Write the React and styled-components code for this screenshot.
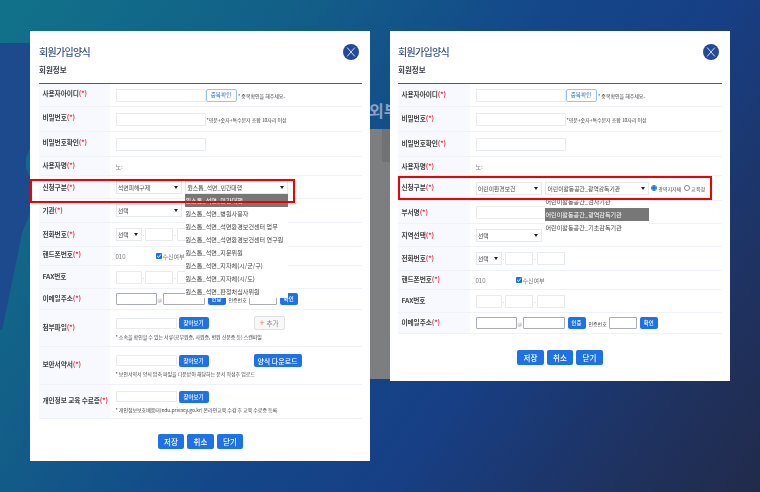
import React from "react";
import styled, { createGlobalStyle } from "styled-components";

const GlobalStyle = createGlobalStyle`
  html, body {
    margin: 0;
    padding: 0;
    width: 760px;
    height: 492px;
    overflow: hidden;
    background: #17408a;
  }
  * {
    box-sizing: border-box;
  }
`;

const Page = styled.div`
  position: relative;
  width: 760px;
  height: 492px;
  overflow: hidden;
  display: flex;
  align-items: flex-start;
  gap: 20px;
  padding: 31px 0 0 30px;
  font-family: "Noto Sans CJK KR", "Noto Sans", sans-serif;
  background: linear-gradient(125deg, #11728a 0%, #126088 26%, #14478a 50%, #173f85 66%, #1f3260 86%, #212a4a 100%);
`;

const LeftShape = styled.div`
  position: absolute;
  left: 0;
  top: 43px;
  width: 30px;
  height: 290px;
  background: #1c4a8c;
  clip-path: polygon(0 0, 30px 0, 30px 105px, 26px 115px, 26px 125px, 30px 135px, 30px 170px, 22px 190px, 15px 225px, 2px 287px, 0 287px);
`;

const BackWindow = styled.div`
  position: absolute;
  left: 370px;
  top: 129px;
  width: 20px;
  height: 251px;
  background: #7d7e7f;
  border-bottom: 1px solid #1f3f7d;
`;

const BackScroll = styled.div`
  position: absolute;
  right: 0;
  top: 0;
  width: 8px;
  height: 33px;
  background: #717273;
`;

const BackTitle = styled.div`
  position: absolute;
  left: 369px;
  top: 98px;
  white-space: nowrap;
  font-size: 16px;
  font-weight: 700;
  color: #8ba2c6;
`;

const Panel = styled.section`
  --inset: ${(p) => p.$inset}px;
  position: relative;
  z-index: 1;
  flex: 0 0 340px;
  height: ${(p) => p.$height}px;
  padding: 13px 8px 0 var(--inset);
  background: #fff;
  filter: blur(0.45px);
`;

const Head = styled.header`
  display: flex;
  align-items: center;
  justify-content: space-between;
  height: 16px;
  padding-right: 3px;
`;

const Title = styled.h2`
  margin: 0;
  font-size: 10px;
  line-height: 14px;
  font-weight: 500;
  letter-spacing: -0.7px;
  color: #3a5688;
`;

const CloseButton = styled.button`
  display: block;
  width: 16px;
  height: 16px;
  padding: 0;
  border: 0;
  background: none;
  svg {
    display: block;
  }
`;

const SubTitle = styled.h3`
  margin: 3px 0 0;
  height: 20px;
  font-size: 7.5px;
  line-height: 14px;
  font-weight: 700;
  color: #3c4048;
`;

const Table = styled.div`
  border-top: 1px solid #2f5fa8;
`;

const Row = styled.div`
  display: flex;
  height: ${(p) => p.$h}px;
  border-bottom: 1.5px solid #eff2f6;
`;

const Label = styled.div`
  flex: 0 0 calc(80px - var(--inset));
  padding: ${(p) => p.$top}px 0 0 3.5px;
  background: #f7f9fe;
  font-size: 6.7px;
  line-height: 10px;
  font-weight: 700;
  letter-spacing: -0.1px;
  white-space: nowrap;
  color: #444;
`;

const Req = styled.span`
  color: #e8303c;
`;

const Cell = styled.div`
  flex: 1;
  display: flex;
  align-items: center;
  padding-left: 5.5px;
  font-size: 6px;
  color: #777;
  white-space: nowrap;
`;

const StackCell = styled(Cell)`
  flex-direction: column;
  align-items: flex-start;
  justify-content: center;
  gap: 3px;
`;

const Line = styled.div`
  display: flex;
  align-items: center;
`;

const Input = styled.div`
  flex: 0 0 auto;
  width: ${(p) => p.$w}px;
  height: ${(p) => p.$h || 13}px;
  margin-left: ${(p) => p.$ml || 0}px;
  background: #fff;
  border: 1px solid ${(p) => (p.$dark ? "#a9acb2" : "#e9ebef")};
  border-radius: 1px;
`;

const Select = styled.div`
  flex: 0 0 auto;
  display: flex;
  align-items: center;
  justify-content: space-between;
  width: ${(p) => p.$w}px;
  height: 13px;
  margin-right: ${(p) => p.$mr || 0}px;
  padding: 0 3px 0 1.5px;
  background: #fff;
  border: 1px solid #e6e8ec;
  font-size: 5.8px;
  color: #444;
  &::after {
    content: "";
    border-left: 2px solid transparent;
    border-right: 2px solid transparent;
    border-top: 3px solid #222;
  }
`;

const Note = styled.span`
  font-size: 5px;
  line-height: 7px;
  letter-spacing: -0.05px;
  color: #444;
  margin-left: ${(p) => p.$ml || 0}px;
`;

const Dash = styled.span`
  flex: 0 0 ${(p) => p.$w || 3}px;
  text-align: center;
  font-size: 5px;
  color: #888;
`;

const CheckBox = styled.span`
  display: inline-flex;
  align-items: center;
  justify-content: center;
  width: 6px;
  height: 6px;
  margin-left: ${(p) => p.$ml}px;
  margin-right: 1px;
  border-radius: 1px;
  background: #1a73d8;
`;

const OutlineButton = styled.div`
  flex: 0 0 auto;
  display: flex;
  align-items: center;
  justify-content: center;
  width: 31px;
  height: 13px;
  border: 1px solid #9cc0ef;
  border-radius: 2px;
  background: #fff;
  font-size: 5.6px;
  color: #2f74c8;
`;

const BlueButton = styled.div`
  flex: 0 0 auto;
  display: flex;
  align-items: center;
  justify-content: center;
  width: ${(p) => p.$w}px;
  height: ${(p) => p.$h || 12}px;
  margin-left: ${(p) => p.$ml || 0}px;
  border-radius: 2px;
  background: #1f72e6;
  font-size: ${(p) => p.$fs || 5.4}px;
  font-weight: 500;
  color: #fff;
`;

const AddButton = styled.div`
  flex: 0 0 auto;
  display: flex;
  align-items: center;
  justify-content: center;
  gap: 2px;
  width: 31px;
  height: 14px;
  margin-left: 45px;
  border: 1px solid #dfe1e4;
  border-radius: 2px;
  background: #f8f8f8;
  font-size: 6.6px;
  color: #888;
  i {
    font-style: normal;
    font-size: 9px;
    line-height: 8px;
    color: #ef7a68;
  }
`;

const Actions = styled.div`
  display: flex;
  justify-content: center;
  gap: 3px;
  margin-top: ${(p) => p.$mt}px;
`;

const ActionButton = styled.div`
  display: flex;
  align-items: center;
  justify-content: center;
  width: 26.5px;
  height: 15px;
  border-radius: 2px;
  background: #1f72e6;
  font-size: 7.5px;
  font-weight: 500;
  color: #fff;
`;

const Dropdown = styled.ul`
  position: absolute;
  left: ${(p) => p.$x}px;
  top: ${(p) => p.$y}px;
  width: ${(p) => p.$w}px;
  margin: 0;
  padding: 0;
  list-style: none;
  background: #fff;
`;

const Option = styled.li`
  height: 13px;
  padding-left: 0.5px;
  font-size: 6.1px;
  line-height: 13px;
  white-space: nowrap;
  color: ${(p) => (p.$active ? "#fff" : "#444")};
  background: ${(p) => (p.$active ? "#777" : "#fff")};
`;

const Highlight = styled.div`
  position: absolute;
  left: ${(p) => p.$x}px;
  top: ${(p) => p.$y}px;
  width: ${(p) => p.$w}px;
  height: ${(p) => p.$h}px;
  border: 2.5px solid #f00000;
  pointer-events: none;
`;

const Radio = styled.span`
  flex: 0 0 auto;
  width: 6.3px;
  height: 6.3px;
  margin-left: ${(p) => p.$ml}px;
  margin-right: 1px;
  border-radius: 50%;
  border: 1px solid ${(p) => (p.$on ? "#1a73d8" : "#888")};
  background: ${(p) => (p.$on ? "radial-gradient(circle, #1a73d8 55%, #fff 60%)" : "#fff")};
`;

const CloseIcon = () => (
  <svg width="16" height="16" viewBox="0 0 16 16">
    <circle cx="8" cy="8" r="8" fill="#24499a" />
    <path d="M4.2 3.6 11.8 12.4M11.8 3.6 4.2 12.4" stroke="#e8eefa" strokeWidth="0.9" fill="none" />
  </svg>
);

const Check = () => (
  <svg width="6" height="6" viewBox="0 0 6 6">
    <path d="M1.2 3 2.6 4.4 4.9 1.5" stroke="#fff" strokeWidth="1" fill="none" />
  </svg>
);

const FieldLabel = ({ top, text, required = true }) => (
  <Label $top={top}>
    {text}
    {required && <Req>(*)</Req>}
  </Label>
);

const PhoneInputs = ({ first }) => (
  <>
    {first ? <Select $w={26}>선택</Select> : <Input $w={26} />}
    <Dash $w={3.5}>-</Dash>
    <Input $w={28} />
    <Dash $w={3.5}>-</Dash>
    <Input $w={28} />
  </>
);

const EmailInputs = () => (
  <>
    <Input $w={41.5} $h={12} $dark />
    <Dash $w={5.5}>@</Dash>
    <Input $w={42} $h={12} $dark />
    <BlueButton $w={18} $ml={3}>인증</BlueButton>
    <Note $ml={3}>인증번호</Note>
    <Input $w={28} $h={12} $dark $ml={2} />
    <BlueButton $w={18} $ml={3}>확인</BlueButton>
  </>
);

const leftOptions = [
  "원스톱_석면_민간대행",
  "원스톱_석면_병원사용자",
  "원스톱_석면_석면환경보건센터 업무",
  "원스톱_석면_석면환경보건센터 연구원",
  "원스톱_석면_지문위원",
  "원스톱_석면_지자체(시/군/구)",
  "원스톱_석면_지자체(시/도)",
  "원스톱_석면_판정처심사위원",
];

const rightOptions = [
  "어린이활동공간_검사기관",
  "어린이활동공간_광역감독기관",
  "어린이활동공간_기초감독기관",
];

const TopRows = ({ tops }) => (
  <>
    <Row $h={23}>
      <FieldLabel top={tops[0]} text="사용자아이디" />
      <Cell>
        <Input $w={90} />
        <OutlineButton>중복확인</OutlineButton>
        <Note $ml={1.5}>* 중복확인을 해주세요.</Note>
      </Cell>
    </Row>
    <Row $h={25}>
      <FieldLabel top={tops[1]} text="비밀번호" />
      <Cell>
        <Input $w={90} />
        <Note $ml={1}>*영문+숫자+특수문자 조합 10자리 이상</Note>
      </Cell>
    </Row>
    <Row $h={25}>
      <FieldLabel top={tops[2]} text="비밀번호확인" />
      <Cell>
        <Input $w={90} />
      </Cell>
    </Row>
    <Row $h={19}>
      <FieldLabel top={tops[3]} text="사용자명" />
      <Cell>노:</Cell>
    </Row>
  </>
);

const LeftPanel = () => (
  <Panel $inset={9} $height={430}>
    <Head>
      <Title>회원가입양식</Title>
      <CloseButton aria-label="닫기">
        <CloseIcon />
      </CloseButton>
    </Head>
    <SubTitle>회원정보</SubTitle>
    <Table>
      <TopRows tops={[4, 5, 5, 3]} />
      <Row $h={23}>
        <FieldLabel top={6} text="신청구분" />
        <Cell>
          <Select $w={66} $mr={3.5}>석면피해구제</Select>
          <Select $w={103}>원스톱_석면_민간대행</Select>
        </Cell>
      </Row>
      <Row $h={24}>
        <FieldLabel top={6} text="기관" />
        <Cell>
          <Select $w={66}>선택</Select>
        </Cell>
      </Row>
      <Row $h={24}>
        <FieldLabel top={6} text="전화번호" />
        <Cell>
          <PhoneInputs first />
        </Cell>
      </Row>
      <Row $h={19}>
        <FieldLabel top={2} text="핸드폰번호" />
        <Cell>
          010
          <CheckBox $ml={30}>
            <Check />
          </CheckBox>
          수신여부
        </Cell>
      </Row>
      <Row $h={23}>
        <FieldLabel top={5} text="FAX번호" required={false} />
        <Cell>
          <PhoneInputs />
        </Cell>
      </Row>
      <Row $h={21}>
        <FieldLabel top={4} text="이메일주소" />
        <Cell>
          <EmailInputs />
        </Cell>
      </Row>
      <Row $h={37}>
        <FieldLabel top={12} text="첨부파일" />
        <StackCell>
          <Line>
            <Input $w={61} $h={11} />
            <BlueButton $w={30} $ml={2}>찾아보기</BlueButton>
            <AddButton>
              <i>+</i>추가
            </AddButton>
          </Line>
          <Note>* 소속을 확인할 수 있는 서류(공무원증, 사원증, 병원 신분증 등) 스캔파일</Note>
        </StackCell>
      </Row>
      <Row $h={38}>
        <FieldLabel top={12} text="보안서약서" />
        <StackCell>
          <Line>
            <Input $w={61} $h={11} />
            <BlueButton $w={30} $ml={2}>찾아보기</BlueButton>
            <BlueButton $w={48} $h={13} $ml={45} $fs={7}>양식 다운로드</BlueButton>
          </Line>
          <Note>* 보안서약서 양식 압축 파일을 다운받아 해당하는 문서 작성후 업로드</Note>
        </StackCell>
      </Row>
      <Row $h={34}>
        <FieldLabel top={10} text="개인정보 교육 수료증" />
        <StackCell>
          <Line>
            <Input $w={61} $h={11} />
            <BlueButton $w={30} $ml={2}>찾아보기</BlueButton>
          </Line>
          <Note>* 개인정보보호배움터(edu.privacy.go.kr) 온라인교육 수강 후 교육 수료증 등록</Note>
        </StackCell>
      </Row>
    </Table>
    <Actions $mt={15}>
      <ActionButton>저장</ActionButton>
      <ActionButton>취소</ActionButton>
      <ActionButton>닫기</ActionButton>
    </Actions>
    <Dropdown $x={155} $y={163} $w={103}>
      {leftOptions.map((o, i) => (
        <Option key={o} $active={i === 0}>{o}</Option>
      ))}
    </Dropdown>
    <Highlight $x={0} $y={148} $w={265} $h={24} />
  </Panel>
);

const RightPanel = () => (
  <Panel $inset={8} $height={350}>
    <Head>
      <Title>회원가입양식</Title>
      <CloseButton aria-label="닫기">
        <CloseIcon />
      </CloseButton>
    </Head>
    <SubTitle>회원정보</SubTitle>
    <Table>
      <TopRows tops={[5, 6, 6, 4]} />
      <Row $h={25}>
        <FieldLabel top={6} text="신청구분" />
        <Cell>
          <Select $w={66.5} $mr={3}>어린이환경보건</Select>
          <Select $w={104}>어린이활동공간_광역감독기관</Select>
          <Radio $ml={2} $on />
          <Note>광역지자체</Note>
          <Radio $ml={3} />
          <Note>교육청</Note>
        </Cell>
      </Row>
      <Row $h={23}>
        <FieldLabel top={6} text="부서명" />
        <Cell>
          <Input $w={90} />
        </Cell>
      </Row>
      <Row $h={23}>
        <FieldLabel top={6} text="지역선택" />
        <Cell>
          <Select $w={66}>선택</Select>
        </Cell>
      </Row>
      <Row $h={24}>
        <FieldLabel top={6} text="전화번호" />
        <Cell>
          <PhoneInputs first />
        </Cell>
      </Row>
      <Row $h={19}>
        <FieldLabel top={3} text="핸드폰번호" />
        <Cell>
          010
          <CheckBox $ml={30}>
            <Check />
          </CheckBox>
          수신여부
        </Cell>
      </Row>
      <Row $h={23}>
        <FieldLabel top={5} text="FAX번호" required={false} />
        <Cell>
          <PhoneInputs />
        </Cell>
      </Row>
      <Row $h={21}>
        <FieldLabel top={4} text="이메일주소" />
        <Cell>
          <EmailInputs />
        </Cell>
      </Row>
    </Table>
    <Actions $mt={16}>
      <ActionButton>저장</ActionButton>
      <ActionButton>취소</ActionButton>
      <ActionButton>닫기</ActionButton>
    </Actions>
    <Dropdown $x={155} $y={164} $w={104}>
      {rightOptions.map((o, i) => (
        <Option key={o} $active={i === 1}>{o}</Option>
      ))}
    </Dropdown>
    <Highlight $x={8} $y={145} $w={314} $h={24} />
  </Panel>
);

export default function App() {
  return (
    <Page>
      <GlobalStyle />
      <LeftShape />
      <BackTitle>외부</BackTitle>
      <BackWindow>
        <BackScroll />
      </BackWindow>
      <LeftPanel />
      <RightPanel />
    </Page>
  );
}
